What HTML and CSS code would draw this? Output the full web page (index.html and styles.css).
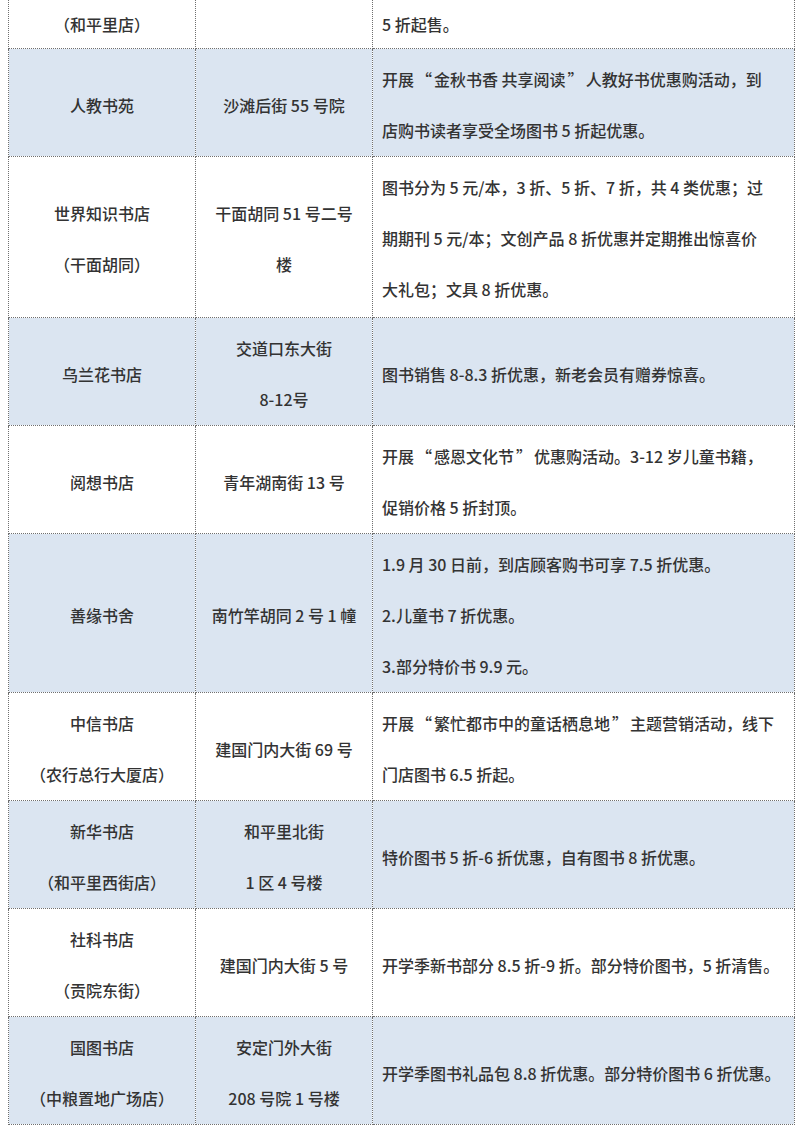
FILE: index.html
```html
<!DOCTYPE html>
<html lang="zh-CN">
<head>
<meta charset="utf-8">
<title>书店优惠活动</title>
<link rel="stylesheet" href="styles.css">
</head>
<body>
<table class="stores">
  <colgroup>
    <col class="c-name">
    <col class="c-addr">
    <col class="c-offer">
  </colgroup>
  <tbody>
    <tr class="cut">
      <td class="name">（和平里店）</td>
      <td class="addr"></td>
      <td class="offer">5 折起售。</td>
    </tr>
    <tr class="shade">
      <td class="name">人教书苑</td>
      <td class="addr">沙滩后街 55 号院</td>
      <td class="offer">开展<span class="q">“</span>金秋书香 共享阅读<span class="q">”</span>人教好书优惠购活动，到<br>店购书读者享受全场图书 5 折起优惠。</td>
    </tr>
    <tr class="tall">
      <td class="name">世界知识书店<br>（干面胡同）</td>
      <td class="addr">干面胡同 51 号二号<br>楼</td>
      <td class="offer">图书分为 5 元/本，3 折、5 折、7 折，共 4 类优惠；过<br>期期刊 5 元/本；文创产品 8 折优惠并定期推出惊喜价<br>大礼包；文具 8 折优惠。</td>
    </tr>
    <tr class="shade">
      <td class="name">乌兰花书店</td>
      <td class="addr">交道口东大街<br>8-12号</td>
      <td class="offer">图书销售 8-8.3 折优惠，新老会员有赠券惊喜。</td>
    </tr>
    <tr>
      <td class="name">阅想书店</td>
      <td class="addr">青年湖南街 13 号</td>
      <td class="offer">开展<span class="q">“</span>感恩文化节<span class="q">”</span>优惠购活动。3-12 岁儿童书籍，<br>促销价格 5 折封顶。</td>
    </tr>
    <tr class="shade">
      <td class="name">善缘书舍</td>
      <td class="addr">南竹竿胡同 2 号 1 幢</td>
      <td class="offer">1.9 月 30 日前，到店顾客购书可享 7.5 折优惠。<br>2.儿童书 7 折优惠。<br>3.部分特价书 9.9 元。</td>
    </tr>
    <tr>
      <td class="name">中信书店<br>（农行总行大厦店）</td>
      <td class="addr">建国门内大街 69 号</td>
      <td class="offer">开展<span class="q">“</span>繁忙都市中的童话栖息地<span class="q">”</span>主题营销活动，线下<br>门店图书 6.5 折起。</td>
    </tr>
    <tr class="shade">
      <td class="name">新华书店<br>（和平里西街店）</td>
      <td class="addr">和平里北街<br>1 区 4 号楼</td>
      <td class="offer">特价图书 5 折-6 折优惠，自有图书 8 折优惠。</td>
    </tr>
    <tr>
      <td class="name">社科书店<br>（贡院东街）</td>
      <td class="addr">建国门内大街 5 号</td>
      <td class="offer">开学季新书部分 8.5 折-9 折。部分特价图书，5 折清售。</td>
    </tr>
    <tr class="shade">
      <td class="name">国图书店<br>（中粮置地广场店）</td>
      <td class="addr">安定门外大街<br>208 号院 1 号楼</td>
      <td class="offer">开学季图书礼品包 8.8 折优惠。部分特价图书 6 折优惠。</td>
    </tr>
  </tbody>
</table>
</body>
</html>
```

FILE: styles.css
```css
html, body {
  margin: 0;
  padding: 0;
  background: #ffffff;
}

body {
  padding-left: 8px;
  font-family: "Noto Sans CJK SC", "Noto Sans", sans-serif;
  font-size: 16px;
  font-weight: 500;
  color: #333333;
}

.stores {
  border-collapse: collapse;
  table-layout: fixed;
  width: 786px;
}

.c-name { width: 187px; }
.c-addr { width: 177px; }
.c-offer { width: 422px; }

.stores td {
  border: 1px dotted #6f6f6f;
  padding: 5px 8px 0;
  line-height: 51px;
  vertical-align: middle;
  white-space: nowrap;
  overflow: hidden;
}

.stores td.name,
.stores td.addr {
  text-align: center;
  padding-left: 0;
  padding-right: 0;
}

.stores td.offer {
  text-align: left;
  padding-left: 9px;
}

.stores .q {
  display: inline-block;
  width: 1.25em;
  text-align: center;
}

.stores tr.shade td {
  background: #dbe5f1;
}

.stores tr.tall td {
  padding-bottom: 2px;
}

.stores tr.cut td {
  border-top: none;
  padding-top: 1px;
  line-height: 47px;
}
```
